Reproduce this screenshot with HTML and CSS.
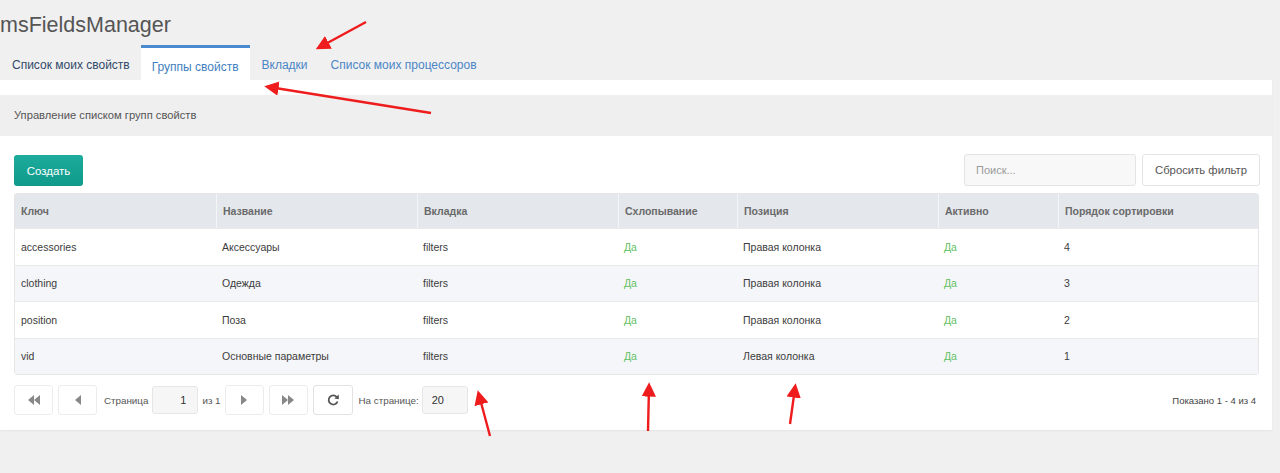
FILE: index.html
```html
<!DOCTYPE html>
<html lang="ru">
<head>
    <meta charset="UTF-8">
    <title>msFieldsManager</title>
    <link rel="stylesheet" href="styles.css">
</head>
<body>
    <h1 class="title">msFieldsManager</h1>

    <div class="tabs">
        <div class="tab tab-dark">Список моих свойств</div>
        <div class="tab active">Группы свойств</div>
        <div class="tab">Вкладки</div>
        <div class="tab">Список моих процессоров</div>
    </div>

    <div class="panel">
        <div class="desc">Управление списком групп свойств</div>

        <div class="panel-body">
            <div class="toolbar">
                <button class="btn-create">Создать</button>
                <div class="toolbar-right">
                    <input class="search" type="text" placeholder="Поиск...">
                    <button class="btn">Сбросить фильтр</button>
                </div>
            </div>

            <table class="grid">
                <colgroup>
                    <col style="width:201px"><col style="width:201px"><col style="width:201px">
                    <col style="width:119px"><col style="width:201px"><col style="width:120px"><col>
                </colgroup>
                <thead>
                    <tr>
                        <th>Ключ</th>
                        <th>Название</th>
                        <th>Вкладка</th>
                        <th>Схлопывание</th>
                        <th>Позиция</th>
                        <th>Активно</th>
                        <th>Порядок сортировки</th>
                    </tr>
                </thead>
                <tbody>
                    <tr><td>accessories</td><td>Аксессуары</td><td>filters</td><td class="yes">Да</td><td>Правая колонка</td><td class="yes">Да</td><td>4</td></tr>
                    <tr><td>clothing</td><td>Одежда</td><td>filters</td><td class="yes">Да</td><td>Правая колонка</td><td class="yes">Да</td><td>3</td></tr>
                    <tr><td>position</td><td>Поза</td><td>filters</td><td class="yes">Да</td><td>Правая колонка</td><td class="yes">Да</td><td>2</td></tr>
                    <tr><td>vid</td><td>Основные параметры</td><td>filters</td><td class="yes">Да</td><td>Левая колонка</td><td class="yes">Да</td><td>1</td></tr>
                </tbody>
            </table>

            <div class="pager">
                <button class="pbtn first">
                    <svg width="12" height="10" viewBox="0 0 12 10"><polygon points="6,0 6,10 0,5" fill="#888"/><polygon points="12,0 12,10 6,5" fill="#888"/></svg>
                </button>
                <button class="pbtn">
                    <svg width="6" height="10" viewBox="0 0 6 10"><polygon points="6,0 6,10 0,5" fill="#888"/></svg>
                </button>
                <span class="plabel">Страница</span>
                <input class="pinput num" type="text" value="1">
                <span class="plabel of">из 1</span>
                <button class="pbtn">
                    <svg width="6" height="10" viewBox="0 0 6 10"><polygon points="0,0 0,10 6,5" fill="#888"/></svg>
                </button>
                <button class="pbtn">
                    <svg width="12" height="10" viewBox="0 0 12 10"><polygon points="0,0 0,10 6,5" fill="#888"/><polygon points="6,0 6,10 12,5" fill="#888"/></svg>
                </button>
                <button class="pbtn refresh">
                    <svg width="12" height="12" viewBox="0 0 12 12"><path d="M10 3.2 A4.6 4.6 0 1 0 10.6 7.5" fill="none" stroke="#555" stroke-width="1.8"/><polygon points="11.8,0.6 11.8,5.2 7.3,4.4" fill="#555"/></svg>
                </button>
                <span class="plabel perpage">На странице:</span>
                <input class="pinput" type="text" value="20">
                <span class="pinfo">Показано 1 - 4 из 4</span>
            </div>
        </div>
    </div>

    <!-- пометки поверх скриншота -->
    <svg class="marks" width="1280" height="473" viewBox="0 0 1280 473">
        <defs>
            <marker id="head" markerWidth="6" markerHeight="6" refX="4" refY="3" orient="auto" markerUnits="strokeWidth">
                <polygon points="0,0 6,3 0,6" fill="#ee1c1c"/>
            </marker>
        </defs>
        <g stroke="#ee1c1c" stroke-width="2.4" fill="none" marker-end="url(#head)">
            <line x1="366" y1="22" x2="320" y2="47"/>
            <line x1="431" y1="113" x2="269" y2="87"/>
            <line x1="490" y1="436" x2="479" y2="395"/>
            <line x1="648" y1="431" x2="649" y2="387"/>
            <line x1="790" y1="424" x2="795" y2="388"/>
        </g>
    </svg>
</body>
</html>
```

FILE: styles.css
```css
body {
    margin: 0;
    background-color: #f0f0f0;
    font-family: "Liberation Sans", Arial, sans-serif;
    color: #555;
    position: relative;
    height: 473px;
    overflow: hidden;
}

.title {
    margin: 0;
    padding: 13px 0 0 0;
    height: 32px;
    font-size: 21.5px;
    font-weight: normal;
    color: #555;
}

.tabs {
    display: flex;
    height: 35px;
}

.tab {
    padding: 0 11px 0 12px;
    line-height: 41px;
    font-size: 12px;
    color: #4a86c6;
}

.tab-dark {
    color: #30496a;
}

.tab.active {
    background: #fff;
    border-top: 3px solid #4a8bd0;
    line-height: 38px;
    padding: 0 11px;
    color: #3f7fc1;
}

.panel {
    background: #fff;
    margin-right: 8px;
    padding-top: 15px;
    height: 335px;
    box-shadow: 0 1px 2px rgba(0, 0, 0, 0.05);
}

.desc {
    background: #efefef;
    height: 41px;
    line-height: 41px;
    padding-left: 14px;
    font-size: 11.2px;
    color: #555;
}

.panel-body {
    padding: 18px 12px 0 14px;
}

.toolbar {
    display: flex;
    justify-content: space-between;
    align-items: center;
    height: 32px;
}

.toolbar-right {
    display: flex;
    gap: 6px;
}

.btn-create {
    background: linear-gradient(180deg, #1cab9c 0%, #0f9a8b 100%);
    border: none;
    border-radius: 3px;
    color: #fff;
    font-family: inherit;
    font-size: 11.5px;
    width: 69px;
    height: 31px;
    margin-top: 1px;
}

.search {
    width: 172px;
    height: 32px;
    box-sizing: border-box;
    background: #f8f8f8;
    border: 1px solid #e4e4e4;
    border-radius: 3px;
    padding: 0 11px;
    font-family: inherit;
    font-size: 11px;
    color: #555;
}

.search::placeholder {
    color: #9a9a9a;
}

.btn {
    width: 118px;
    height: 32px;
    background: #fff;
    border: 1px solid #e4e4e4;
    border-radius: 3px;
    font-family: inherit;
    font-size: 11.3px;
    color: #555;
}

.grid {
    margin-top: 7px;
    width: 1245px;
    border-collapse: separate;
    border-spacing: 0;
    table-layout: fixed;
    border: 1px solid #e6e6e6;
    border-radius: 3px;
    font-size: 10.5px;
}

.grid th {
    background: #e4e7ec;
    height: 34px;
    padding: 0 6px;
    text-align: left;
    font-weight: bold;
    color: #6a6a6a;
    border-left: 1px solid #f4f5f7;
}

.grid th:first-child {
    border-left: none;
}

.grid td {
    height: 35.5px;
    padding: 0 6px;
    color: #3c3c3c;
    border-top: 1px solid #e9e9e9;
}

.grid tbody tr:nth-child(even) td {
    background: #f5f6f9;
}

.grid td.yes {
    color: #63bf63;
}

.pager {
    display: flex;
    align-items: center;
    margin-top: 10px;
    height: 30px;
    font-size: 9.8px;
    color: #555;
}

.pbtn {
    width: 39px;
    height: 30px;
    margin-right: 5px;
    background: #fff;
    border: 1px solid #ececec;
    border-radius: 3px;
    display: flex;
    align-items: center;
    justify-content: center;
    padding: 0;
}

.pbtn.refresh {
    width: 40px;
    border-color: #e2e2e2;
}

.plabel {
    margin: 0 4px 0 2px;
}

.plabel.of {
    margin: 0 4px 0 4px;
}

.plabel.perpage {
    margin: 0 3px 0 1px;
}

.pinput {
    width: 46px;
    height: 28px;
    box-sizing: border-box;
    background: #f6f6f6;
    border: 1px solid #e6e6e6;
    border-radius: 3px;
    padding: 0 9px;
    font-family: inherit;
    font-size: 11px;
    color: #333;
}

.pinput.num {
    text-align: right;
    padding-right: 11px;
}

.pinfo {
    margin-left: auto;
    padding-right: 4px;
    font-size: 9.5px;
    color: #444;
}

.marks {
    position: absolute;
    left: 0;
    top: 0;
    pointer-events: none;
}
```
